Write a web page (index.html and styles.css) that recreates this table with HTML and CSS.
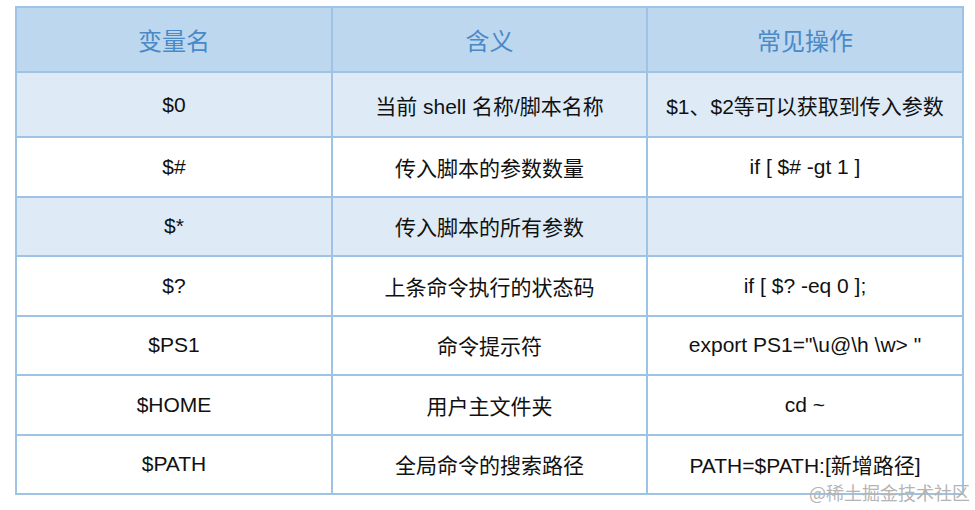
FILE: index.html
```html
<!DOCTYPE html>
<html>
<head>
<meta charset="utf-8">
<link rel="stylesheet" href="styles.css">
</head>
<body>
<div class="page">
<table class="vars">
<thead>
<tr class="head"><th>变量名</th><th>含义</th><th>常见操作</th></tr>
</thead>
<tbody>
<tr class="alt first"><td>$0</td><td>当前 shell 名称/脚本名称</td><td>$1、$2等可以获取到传入参数</td></tr>
<tr><td>$#</td><td>传入脚本的参数数量</td><td>if [ $# -gt 1 ]</td></tr>
<tr class="alt"><td>$*</td><td>传入脚本的所有参数</td><td></td></tr>
<tr><td>$?</td><td>上条命令执行的状态码</td><td>if [ $? -eq 0 ];</td></tr>
<tr><td>$PS1</td><td>命令提示符</td><td>export PS1="\u@\h \w&gt; "</td></tr>
<tr><td>$HOME</td><td>用户主文件夹</td><td>cd ~</td></tr>
<tr><td>$PATH</td><td>全局命令的搜索路径</td><td>PATH=$PATH:[新增路径]</td></tr>
</tbody>
</table>
<div class="mark">@稀土掘金技术社区</div>
</div>
</body>
</html>
```
FILE: styles.css
```css
html, body {
  margin: 0;
  padding: 0;
  background: #ffffff;
}
.page {
  position: relative;
  width: 975px;
  height: 510px;
  padding: 6px 0 0 15px;
  box-sizing: border-box;
  font-family: "Liberation Sans", "Noto Sans CJK SC", Arial, sans-serif;
}
.vars {
  border-collapse: collapse;
  width: 949px;
  table-layout: fixed;
}
.vars th, .vars td {
  border: 2px solid #9fc3e5;
  text-align: center;
  vertical-align: middle;
  padding: 0;
  font-size: 21px;
  color: #111;
  font-weight: normal;
}
.vars th:nth-child(1), .vars td:nth-child(1) { width: 314px; }
.vars th:nth-child(2), .vars td:nth-child(2) { width: 313px; }
.vars tr { height: 59.5px; }
.vars tr.head { height: 65px; background: #bdd7ee; }
.vars tr.head th {
  color: #4a89c8;
  font-size: 24px;
}
.vars tr.first { height: 65px; }
.vars tr.alt { background: #deebf7; }
.mark {
  position: absolute;
  right: 5px;
  bottom: 5px;
  font-size: 18px;
  color: #b4b4b4;
  font-family: "Noto Sans CJK SC", sans-serif;
}
```
